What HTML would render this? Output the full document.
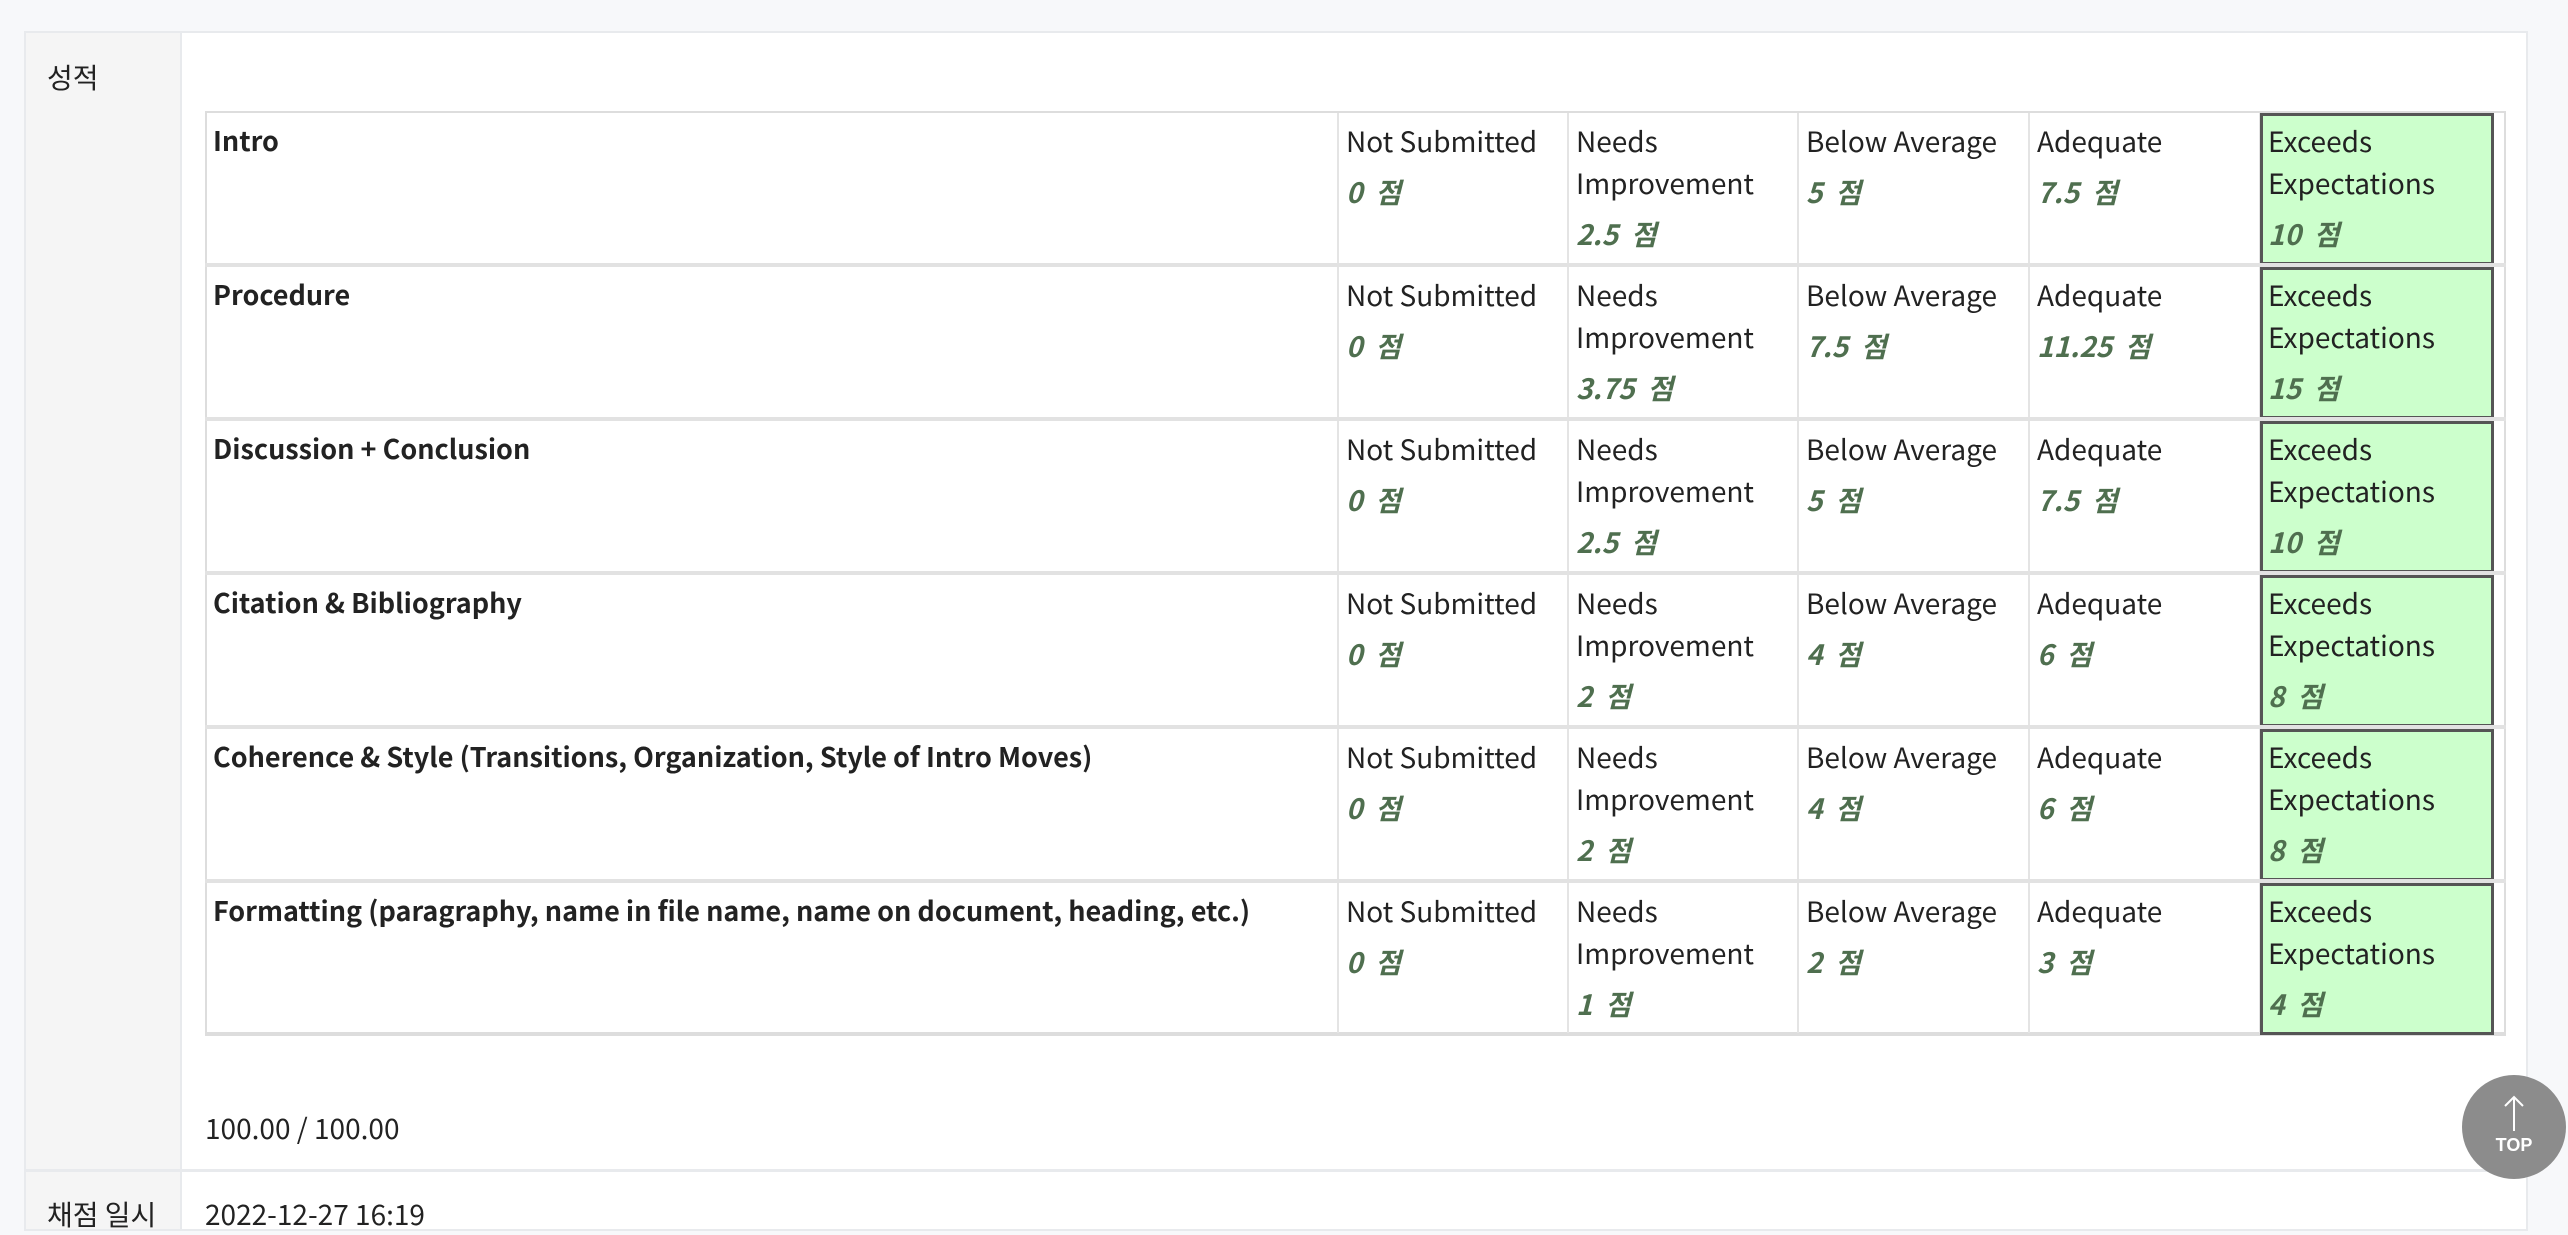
<!DOCTYPE html>
<html><head><meta charset="utf-8"><style>
*{margin:0;padding:0;box-sizing:border-box}
body{width:2568px;height:1217px;overflow:hidden;background:#f7f8fa;position:relative;font-family:"Liberation Sans","Noto Sans CJK KR",sans-serif;color:#222;font-size:28px}
.a{position:absolute}
.box{left:24px;top:31px;width:2504px;height:1200px;background:#fff;border:2px solid #e8eaed}
.lab{left:24px;top:31px;width:158px;height:1200px;background:#f5f5f5;border:2px solid #e8eaed}
.t{font-family:"Noto Sans CJK KR","Liberation Sans",sans-serif;white-space:nowrap;line-height:42px}
.b{font-weight:bold}
.s{font-weight:bold;font-style:italic;color:#4f6f4f}
.hl{background:#e2e2e2}
.vl{background:#e4e4e4;width:2px}
.g{background:#ccffcc;border:3px solid #555}
</style></head><body>
<div class="a box"></div>
<div class="a lab"></div>
<div class="a t" style="left:47px;top:56px">성적</div>
<div class="a" style="left:205px;top:111px;width:2301px;height:925px;border:2px solid #ddd;border-bottom-width:4px"></div>
<div id="rows"></div>
<script>
var rows=[["Intro",[0,2.5,5,7.5,10]],["Procedure",[0,3.75,7.5,11.25,15]],["Discussion + Conclusion",[0,2.5,5,7.5,10]],["Citation &amp; Bibliography",[0,2,4,6,8]],["Coherence &amp; Style (Transitions, Organization, Style of Intro Moves)",[0,2,4,6,8]],["Formatting (paragraphy, name in file name, name on document, heading, etc.)",[0,1,2,3,4]]];
var cols=[1338,1568,1798,2029,2260,2493];
var h='';
rows.forEach(function(r,i){
 var top=111+i*154;
 if(i>0)h+='<div class="a hl" style="left:205px;top:'+(top-2)+'px;width:2301px;height:4px"></div>';
 cols.forEach(function(c){h+='<div class="a vl" style="left:'+(c-1)+'px;top:'+(top+2)+'px;height:150px"></div>';});
 h+='<div class="a g" style="left:2260px;top:'+(top+2)+'px;width:234px;height:152px"></div>';
 h+='<div class="a t b" style="left:213px;top:'+(top+8)+'px;font-size:27px">'+r[0]+'</div>';
 var names=[["Not Submitted"],["Needs","Improvement"],["Below Average"],["Adequate"],["Exceeds","Expectations"]];
 names.forEach(function(n,j){
  var x=cols[j]+8;
  n.forEach(function(l,k){h+='<div class="a t" style="left:'+x+'px;top:'+(top+9+k*42)+'px">'+l+'</div>';});
  var sy=n.length==1?top+60:top+102;
  h+='<div class="a t s" style="left:'+x+'px;top:'+sy+'px">'+r[1][j]+'&nbsp;&nbsp;점</div>';
 });
});
document.getElementById('rows').innerHTML=h;
</script>
<div class="a t" style="left:205px;top:1107px;font-size:28px">100.00 / 100.00</div>
<div class="a" style="left:24px;top:1169px;width:2504px;height:3px;background:#e8eaed"></div>
<div class="a t" style="left:47px;top:1193px">채점 일시</div>
<div class="a t" style="left:205px;top:1193px;font-size:28px">2022-12-27 16:19</div>
<div class="a" style="left:2462px;top:1075px;width:104px;height:104px;border-radius:50%;background:#8c8c8c"></div>
<svg class="a" style="left:2500px;top:1093px" width="28" height="40" viewBox="0 0 28 40"><path d="M14 38V4M5 13L14 4L23 13" stroke="#fff" stroke-width="2" fill="none"/></svg>
<div class="a" style="left:2462px;top:1135px;width:104px;text-align:center;color:#fff;font-size:18px;font-weight:bold">TOP</div>
</body></html>
